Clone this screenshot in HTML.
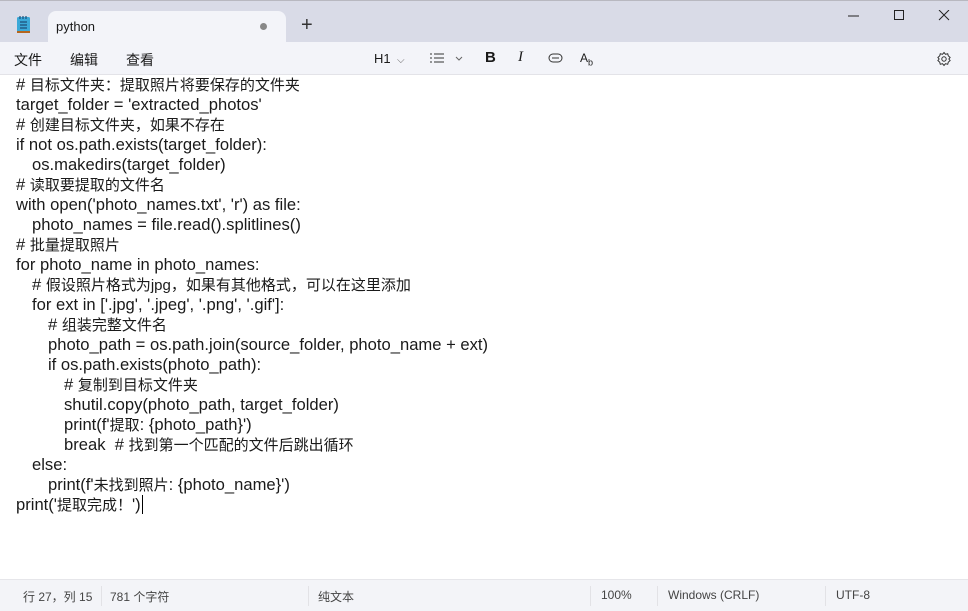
<!DOCTYPE html>
<html><head><meta charset="utf-8"><style>
*{margin:0;padding:0;box-sizing:border-box}
body{width:968px;height:611px;overflow:hidden;background:#fff;font-family:"Liberation Sans","Noto Sans CJK SC",sans-serif;color:#1a1a1a;position:relative}
.title{position:absolute;left:0;top:0;width:968px;height:42px;background:#d9dbe7;border-top:1px solid #b8b8c0}
.tab{position:absolute;left:48px;top:10px;width:238px;height:32px;background:#f3f4f9;border-radius:8px 8px 0 0;font-size:13px;line-height:32px;padding-left:8px}
.tab .dot{position:absolute;left:212px;top:12px;width:7px;height:7px;border-radius:50%;background:#888}
.menu{position:absolute;left:0;top:42px;width:968px;height:33px;background:#f3f4f9;border-bottom:1px solid #e3e3e8;font-size:14px}
.menu span{position:absolute;top:8px}
.ed{position:absolute;left:16px;top:75px;font-size:16.6px}
.ed div{height:20px;line-height:20px;white-space:pre;overflow:visible}
.ed i{font-style:normal;font-size:15px;line-height:10px}
.l1{padding-left:16px}.l2{padding-left:32px}.l3{padding-left:48px}
.status{position:absolute;left:0;top:579px;width:968px;height:32px;background:#f3f4f8;border-top:1px solid #e6e6ea;font-size:12px;color:#444}
.status span{position:absolute;top:8px}
.sep{position:absolute;top:6px;width:1px;height:20px;background:#e2e2e6}
</style></head><body>
<div class="title">
 <svg style="position:absolute;left:16px;top:14px" width="16" height="20" viewBox="0 0 16 20"><rect x="1" y="2" width="13" height="16" rx="1.5" fill="#3ba9d8"/><rect x="1" y="16" width="13" height="2" fill="#b5651d"/><path d="M4 7h7M4 10h7M4 13h7" stroke="#1c4f79" stroke-width="1.2"/><path d="M4 1v3M7 1v3M10 1v3" stroke="#1c4f79" stroke-width="1.2"/></svg>
 <div class="tab">python<div class="dot"></div></div>
 <div style="position:absolute;left:301px;top:13px;font-size:20px;color:#333;font-weight:300">+</div>
 <svg style="position:absolute;left:848px;top:9px" width="104" height="12"><path d="M0 6h11" stroke="#222"/><rect x="46.5" y="0.5" width="9" height="9" fill="none" stroke="#222"/><path d="M91 0l10 10M101 0l-10 10" stroke="#222"/></svg>
</div>
<div class="menu">
 <span style="left:14px">文件</span><span style="left:70px">编辑</span><span style="left:126px">查看</span>
 <span style="left:374px;font-size:13px;top:9px">H1 <span style="position:static;font-size:10px;color:#666">&nbsp;⌵</span></span>
 <svg style="position:absolute;left:430px;top:10px" width="36" height="12"><path d="M0 2h2M0 6h2M0 10h2M4 2h10M4 6h10M4 10h10" stroke="#333"/><path d="M26 5l3 3 3-3" stroke="#666" fill="none"/></svg>
 <span style="left:485px;font-weight:bold;font-size:15px;top:7px">B</span>
 <span style="left:518px;font-style:italic;font-size:15px;top:7px;font-family:'Liberation Serif',serif">I</span>
 <svg style="position:absolute;left:548px;top:11px" width="16" height="10"><rect x="1" y="1" width="13" height="8" rx="4" fill="none" stroke="#333"/><path d="M4 5h7" stroke="#333"/></svg>
 <span style="left:580px;font-size:12px;top:9px">A<sub style="font-size:9px">b</sub></span>
 <svg style="position:absolute;left:936px;top:9px" width="16" height="16" viewBox="0 0 16 16"><circle cx="8" cy="8" r="2.2" fill="none" stroke="#333"/><path d="M8 1.5l1.5 1.8 2.2-.6.6 2.2 1.8 1.5-1.2 1.6 1.2 1.6-1.8 1.5-.6 2.2-2.2-.6L8 14.5l-1.5-1.8-2.2.6-.6-2.2L1.9 9.6l1.2-1.6-1.2-1.6 1.8-1.5.6-2.2 2.2.6z" fill="none" stroke="#333"/></svg>
</div>
<div class="ed">
<div># <i>目标文件夹：提取照片将要保存的文件夹</i></div>
<div>target_folder = 'extracted_photos'</div>
<div># <i>创建目标文件夹，如果不存在</i></div>
<div>if not os.path.exists(target_folder):</div>
<div class="l1">os.makedirs(target_folder)</div>
<div># <i>读取要提取的文件名</i></div>
<div>with open('photo_names.txt', 'r') as file:</div>
<div class="l1">photo_names = file.read().splitlines()</div>
<div># <i>批量提取照片</i></div>
<div>for photo_name in photo_names:</div>
<div class="l1"># <i>假设照片格式为jpg，如果有其他格式，可以在这里添加</i></div>
<div class="l1">for ext in ['.jpg', '.jpeg', '.png', '.gif']:</div>
<div class="l2"># <i>组装完整文件名</i></div>
<div class="l2">photo_path = os.path.join(source_folder, photo_name + ext)</div>
<div class="l2">if os.path.exists(photo_path):</div>
<div class="l3"># <i>复制到目标文件夹</i></div>
<div class="l3">shutil.copy(photo_path, target_folder)</div>
<div class="l3">print(f'<i>提取</i>: {photo_path}')</div>
<div class="l3">break  # <i>找到第一个匹配的文件后跳出循环</i></div>
<div class="l1">else:</div>
<div class="l2">print(f'<i>未找到照片</i>: {photo_name}')</div>
<div>print('<i>提取完成！</i>')<span style="border-left:1px solid #000;margin-left:1px"></span></div>
</div>
<div class="status">
 <span style="left:23px">行 27，列 15</span><div class="sep" style="left:101px"></div>
 <span style="left:110px">781 个字符</span><div class="sep" style="left:308px"></div>
 <span style="left:318px">纯文本</span><div class="sep" style="left:590px"></div>
 <span style="left:601px">100%</span><div class="sep" style="left:657px"></div>
 <span style="left:668px">Windows (CRLF)</span><div class="sep" style="left:825px"></div>
 <span style="left:836px">UTF-8</span>
</div>
</body></html>
